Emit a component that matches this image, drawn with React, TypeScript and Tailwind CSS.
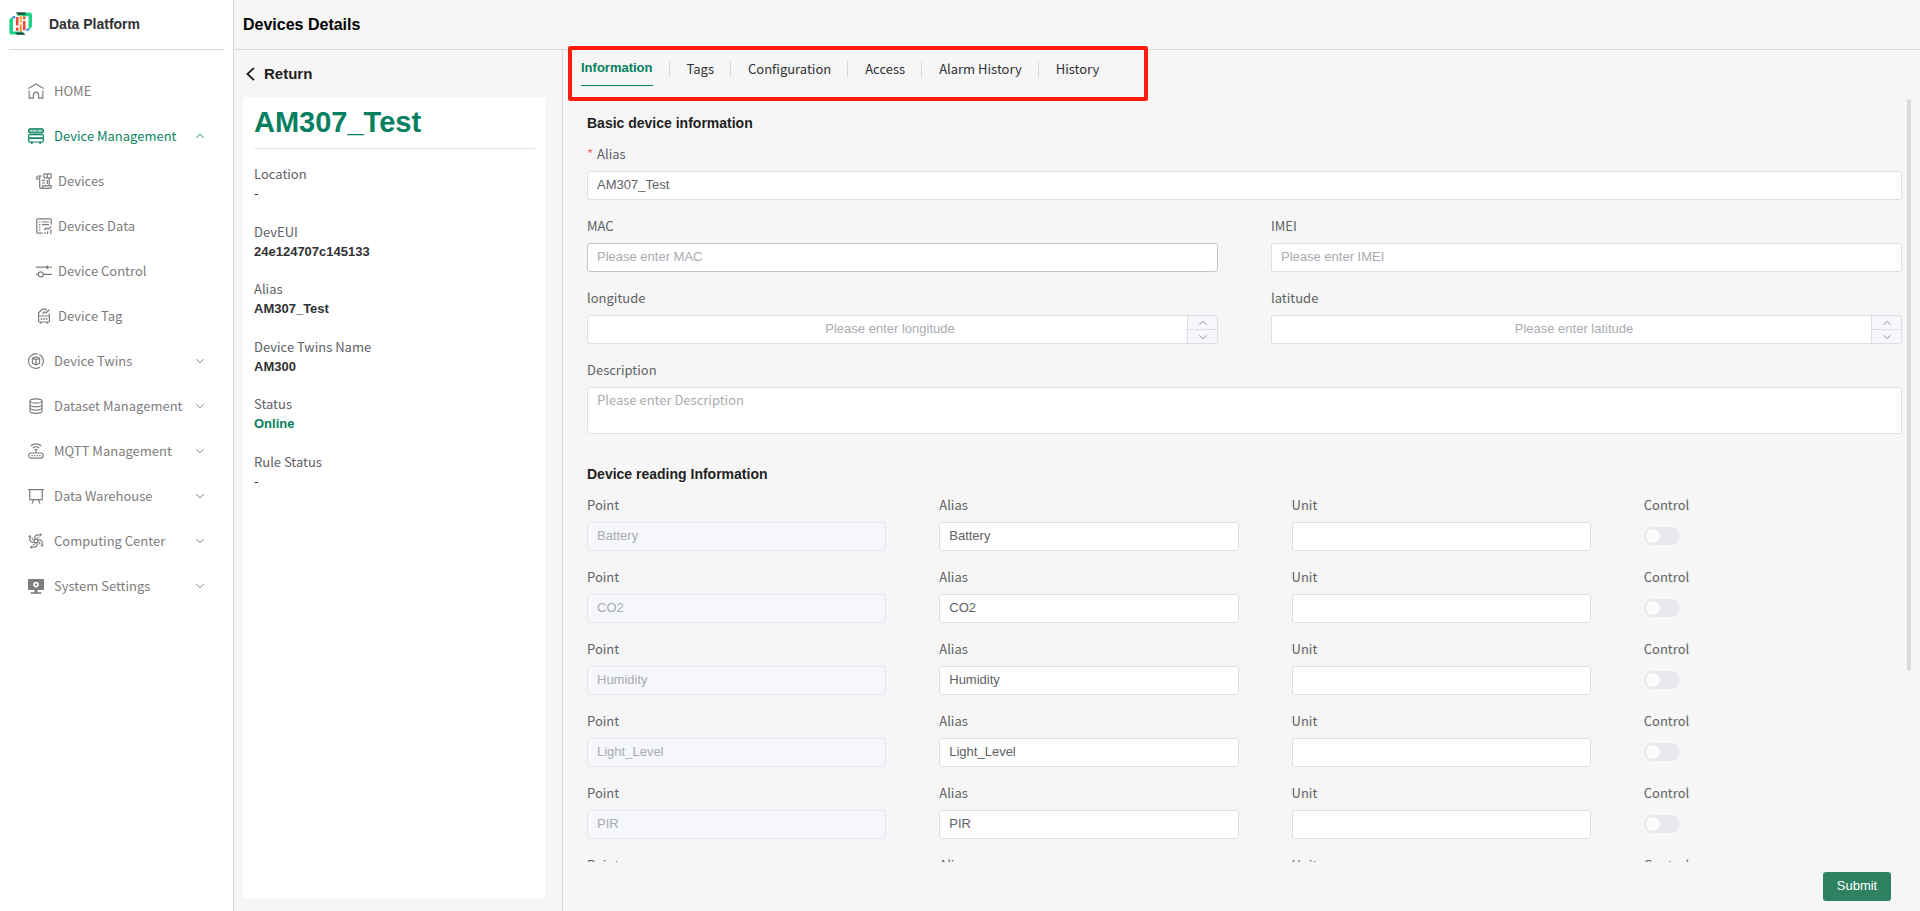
import React, { useId, useState } from "react";

const MENU_FONT = "font-['Noto_Sans_CJK_SC',sans-serif]";

type IconProps = { className?: string };

// 16x16 line icons used in the side menu
function Icon({ children, className = "" }: { children: React.ReactNode; className?: string }) {
  return (
    <svg className={`h-4 w-4 shrink-0 ${className}`} viewBox="0 0 16 16" fill="none" stroke="currentColor" strokeWidth="1.2" aria-hidden="true">
      {children}
    </svg>
  );
}

const HomeIcon = (p: IconProps) => (
  <Icon {...p}>
    <path d="M.4 5.4 8 1l7.6 4.4" />
    <path d="M1.2 7.6v7.6h4.2v-3.4a2.6 2.6 0 0 1 5.2 0v3.4h4.2V7.6" />
  </Icon>
);

const ServerIcon = (p: IconProps) => (
  <Icon {...p}>
    <rect x=".7" y=".8" width="14.6" height="4" rx="1.2" fill="currentColor" fillOpacity=".55" />
    <path d="M3 2.8h1.4M6 2.8h1.4M11 2.8h2" stroke="#fff" strokeWidth="1" />
    <rect x=".7" y="6.6" width="14.6" height="3.6" rx="1" />
    <rect x=".7" y="10.2" width="14.6" height="3.8" rx="1" />
    <path d="M3.8 14v1.8M12.2 14v1.8" strokeWidth="2" />
  </Icon>
);

const DevicesIcon = (p: IconProps) => (
  <Icon {...p}>
    <path d="M6 3H2.2a1.5 1.5 0 0 0-1.5 1.5V6h3M3.7 3.4V14c0 .8.5 1.4 1.4 1.4h8.8c.8 0 1.4-.6 1.4-1.4v-1.2H6.6V14c0 .8-.6 1.4-1.4 1.4" />
    <rect x="8" y=".8" width="7.2" height="4" rx=".6" />
    <path d="M11.4 1v3.6M13.2 4.8v8M11.4 7v4M6 7.4h3M6 10h3" />
  </Icon>
);

const DevicesDataIcon = (p: IconProps) => (
  <Icon {...p}>
    <path d="M6.6 15.2H1.8a1 1 0 0 1-1-1V1.8a1 1 0 0 1 1-1h12.4a1 1 0 0 1 1 1v5" />
    <path d="M3 4h1.4M6 4h7M3 6.6h1.4M6 6.6h7M3 9.2h1.4M3 11.8h1.4" />
    <path d="m8 12 2.4-2.2 1.8 1.4 3-2.8M9 14v2M11.6 13.4V16M14.8 11.6V16" />
  </Icon>
);

const DeviceControlIcon = (p: IconProps) => (
  <Icon {...p}>
    <path d="M0 4.2h9M13.6 4.2H16M0 11.4h2.4M7.2 11.4H16" strokeWidth="1.3" />
    <circle cx="11.2" cy="4.2" r="1.7" fill="currentColor" stroke="none" />
    <circle cx="4.8" cy="11.4" r="2.5" />
  </Icon>
);

const DeviceTagIcon = (p: IconProps) => (
  <Icon {...p}>
    <path d="M2.6 8V4.8L6.4 1.2h3.2l1.6 1M13.4 5.6V8" />
    <path d="m6.4 5.8 2.2-2L10 5l3.4-3.2" />
    <rect x="2.6" y="8" width="10.8" height="6" rx=".8" />
    <path d="M4.6 11h1.8M7.2 11h1.6M9.6 11h1.8M4.6 14v1.8M11.4 14v1.8" strokeWidth="1.6" />
  </Icon>
);

const TwinsIcon = (p: IconProps) => (
  <Icon {...p}>
    <path d="M9.8 1A7.3 7.3 0 1 0 12 14.1M13.4 13A7.3 7.3 0 0 0 11.2 1.5" />
    <path d="M4.4 5.2 8 4l3.6 1.2v5.2L8 11.8l-3.6-1.4zM4.4 5.4 8 6.6l3.6-1.2M8 6.6v5.2" />
  </Icon>
);

const DatasetIcon = (p: IconProps) => (
  <Icon {...p}>
    <ellipse cx="8" cy="3" rx="6" ry="2.2" />
    <path d="M2 3v10c0 1.3 2.7 2.3 6 2.3s6-1 6-2.3V3M2 6.4c0 1.3 2.7 2.2 6 2.2s6-.9 6-2.2M2 9.8C2 11.1 4.7 12 8 12s6-.9 6-2.2" />
  </Icon>
);

const MqttIcon = (p: IconProps) => (
  <Icon {...p}>
    <path d="M2.8 2.8C5.8.2 10.2.2 13.2 2.8M4.8 5c1.9-1.6 4.5-1.6 6.4 0M6.6 7c.9-.7 1.9-.7 2.8 0M8 7.4v2.4" />
    <rect x=".8" y="10" width="14.4" height="5.2" rx="2.6" />
    <path d="M3.4 12.6h9.2" strokeDasharray="1.4 1.2" strokeWidth="1.4" />
  </Icon>
);

const WarehouseIcon = (p: IconProps) => (
  <Icon {...p}>
    <path d="M0 1.6h16M1.8 1.6v10h12.4v-10M5.8 11.8 4 15.4M10.2 11.8l1.8 3.6" />
  </Icon>
);

const ComputingIcon = (p: IconProps) => (
  <Icon {...p}>
    <circle cx="8" cy="8" r="2" strokeWidth="1.4" />
    {[0, 90, 180, 270].map((angle) => (
      <g key={angle} transform={`rotate(${angle} 8 8)`}>
        <path d="M6.6 5.4C6.6 3 8.2 1.8 10 1.8h2.4" />
        <path d="M9.4 5.2c.4-.8 1-1.2 2-1.2" />
        <path d="M12 .2 14.2 1.8 12 3.4z" fill="currentColor" stroke="none" />
      </g>
    ))}
  </Icon>
);

const SettingsIcon = (p: IconProps) => (
  <Icon {...p}>
    <rect x="0" y="1" width="16" height="11" rx="1" fill="currentColor" stroke="none" />
    <circle cx="8" cy="6.6" r="2" stroke="#fff" strokeWidth="1.6" />
    <path d="M2.8 15h10.4" strokeWidth="1.6" />
    <path d="M8 12v3" strokeWidth="3" />
  </Icon>
);

function Logo() {
  return (
    <svg className="h-6 w-6 shrink-0" viewBox="0 0 24 24" aria-hidden="true">
      <path d="M7 .4h13.5A2.5 2.5 0 0 1 23 3v11.4L19.5 19V4.2H9.6z" fill="#1fd38a" />
      <path d="M7 .4h9.5v2.4H8.7z" fill="#1b4d3c" />
      <path d="M.4 7.2 4 4.6v15h9l2.6 3H3A2.6 2.6 0 0 1 .4 20z" fill="#1fd38a" />
      <path d="M6.5 20.4h8l1.8 2.3H7.8z" fill="#1b4d3c" />
      <circle cx="5" cy="5.2" r="1.3" fill="#3a86f0" />
      <circle cx="18.4" cy="17.8" r="1.3" fill="#3a86f0" />
      <path d="M8.2 5v8.6M15.2 9v9" stroke="#ea4b3c" strokeWidth="2.6" />
      <path d="M8.2 15.4v3.4M15.2 4.4v2.8" stroke="#ea4b3c" strokeWidth="2.6" />
      <path d="M11.7 3.4v7.2" stroke="#f5b335" strokeWidth="2" />
      <path d="M11.7 12.4v7.4" stroke="#f08a3a" strokeWidth="2" />
    </svg>
  );
}

function Chevron({ up = false, className = "" }: { up?: boolean; className?: string }) {
  return (
    <svg className={className} viewBox="0 0 8 8" fill="none" stroke="currentColor" aria-hidden="true">
      <path d={up ? "M.4 5.8 4 2.2l3.6 3.6" : "M.4 2.2 4 5.8l3.6-3.6"} />
    </svg>
  );
}

const menu = [
  { label: "HOME", icon: HomeIcon },
  {
    label: "Device Management",
    icon: ServerIcon,
    open: true,
    children: [
      { label: "Devices", icon: DevicesIcon },
      { label: "Devices Data", icon: DevicesDataIcon },
      { label: "Device Control", icon: DeviceControlIcon },
      { label: "Device Tag", icon: DeviceTagIcon },
    ],
  },
  { label: "Device Twins", icon: TwinsIcon, expandable: true },
  { label: "Dataset Management", icon: DatasetIcon, expandable: true },
  { label: "MQTT Management", icon: MqttIcon, expandable: true },
  { label: "Data Warehouse", icon: WarehouseIcon, expandable: true },
  { label: "Computing Center", icon: ComputingIcon, expandable: true },
  { label: "System Settings", icon: SettingsIcon, expandable: true },
];

const summary = [
  { label: "Location", value: "-" },
  { label: "DevEUI", value: "24e124707c145133" },
  { label: "Alias", value: "AM307_Test" },
  { label: "Device Twins Name", value: "AM300" },
  { label: "Status", value: "Online" },
  { label: "Rule Status", value: "-" },
];

const tabs = ["Information", "Tags", "Configuration", "Access", "Alarm History", "History"];

const readings = ["Battery", "CO2", "Humidity", "Light_Level", "PIR", "Pressure", "Temperature"];

function Sidebar() {
  return (
    <aside className="flex w-[234px] shrink-0 flex-col border-r border-[#d9d9d9] bg-white">
      <div className="mx-[9px] flex h-[50px] items-center gap-4 border-b border-[#d9d9d9] pb-px">
        <Logo />
        <span className="text-sm font-bold text-[#303133]">Data Platform</span>
      </div>
      <nav className={`pt-[18px] text-[13px] text-[#7d7d7d] ${MENU_FONT}`}>
        {menu.map(({ label, icon: ItemIcon, open, expandable, children }) => (
          <div key={label}>
            <a href="#" className={`flex h-[45px] items-center gap-[10px] pr-[29px] pl-7 ${open ? "text-[#0a8463]" : ""}`}>
              <ItemIcon />
              <span className="flex-1 whitespace-nowrap">{label}</span>
              {(open || expandable) && <Chevron up={open} className="h-2 w-2 shrink-0" />}
            </a>
            {children?.map(({ label: childLabel, icon: ChildIcon }) => (
              <a key={childLabel} href="#" className="flex h-[45px] items-center gap-[6px] pl-9">
                <ChildIcon />
                {childLabel}
              </a>
            ))}
          </div>
        ))}
      </nav>
    </aside>
  );
}

function DeviceSummary() {
  return (
    <section className="flex w-[329px] shrink-0 flex-col border-r border-[#d9d9d9] pr-[17px] pb-[13px] pl-[9px]">
      <button type="button" className="flex h-[47px] items-center gap-[9px] pt-px pl-[3px] text-[15px] font-bold text-[#1f1f1f]">
        <svg className="h-[14px] w-[9px]" viewBox="0 0 9 14" fill="none" stroke="currentColor" strokeWidth="1.8" aria-hidden="true">
          <path d="M8 .8 1.4 7 8 13.2" />
        </svg>
        Return
      </button>
      <div className="flex-1 rounded-[3px] bg-white pr-[10px] pl-[11px]">
        <h1 className="h-[52px] border-b border-[#e4e4e4] text-[29px] leading-[50px] font-bold text-[#048060]">AM307_Test</h1>
        <dl className="mt-[15px] grid h-[345px] grid-rows-6">
          {summary.map(({ label, value }) => (
            <div key={label}>
              <dt className={`text-[13px] leading-5 text-[#606266] ${MENU_FONT}`}>{label}</dt>
              <dd className={`text-[13px] leading-5 ${value === "-" ? "" : "font-bold"} ${value === "Online" ? "text-[#048060]" : "text-[#303133]"}`}>
                {value}
              </dd>
            </div>
          ))}
        </dl>
      </div>
    </section>
  );
}

function Label({ htmlFor, required, children }: { htmlFor: string; required?: boolean; children: React.ReactNode }) {
  return (
    <label htmlFor={htmlFor} className={`mb-2 block text-[13px] leading-[18px] text-[#606266] ${MENU_FONT}`}>
      {required && <span className="mr-1 text-[#f56c6c]">*</span>}
      {children}
    </label>
  );
}

interface TextFieldProps {
  label: string;
  value?: string;
  placeholder?: string;
  required?: boolean;
  disabled?: boolean;
  active?: boolean;
}

function TextField({ label, value = "", placeholder, required, disabled, active }: TextFieldProps) {
  const id = useId();
  const [text, setText] = useState(value);
  return (
    <div className="mb-[17px]">
      <Label htmlFor={id} required={required}>{label}</Label>
      <input
        id={id}
        type="text"
        value={text}
        placeholder={placeholder}
        disabled={disabled}
        onChange={(e) => setText(e.target.value)}
        className={`block h-[29px] w-full rounded-[3px] border bg-white px-[9px] pb-[2px] text-[13px] text-[#606266] placeholder:text-[#a8abb2] disabled:border-[#e4e7ed] disabled:bg-[#f5f7fa] disabled:text-[#a8abb2] ${active ? "border-[#c0c4cc]" : "border-[#dcdfe6]"}`}
      />
    </div>
  );
}

function NumberField({ label, placeholder }: { label: string; placeholder: string }) {
  const id = useId();
  const [value, setValue] = useState("");
  const step = (by: number) => setValue(String(Number(value || 0) + by));
  return (
    <div className="mb-[17px]">
      <Label htmlFor={id}>{label}</Label>
      <div className="flex h-[29px] overflow-hidden rounded-[3px] border border-[#dcdfe6] bg-white">
        <input
          id={id}
          type="text"
          inputMode="decimal"
          value={value}
          placeholder={placeholder}
          onChange={(e) => setValue(e.target.value)}
          className="min-w-0 flex-1 pr-1 pb-[2px] pl-[9px] text-center text-[13px] text-[#606266] placeholder:text-[#a8abb2]"
        />
        <div className="flex w-[30px] flex-col border-l border-[#dcdfe6] bg-[#f5f7fa] text-[#909399]">
          <button type="button" aria-label={`Increase ${label}`} onClick={() => step(1)} className="flex flex-1 items-center justify-center border-b border-[#dcdfe6]">
            <Chevron up className="h-2 w-2" />
          </button>
          <button type="button" aria-label={`Decrease ${label}`} onClick={() => step(-1)} className="flex flex-1 items-center justify-center">
            <Chevron className="h-2 w-2" />
          </button>
        </div>
      </div>
    </div>
  );
}

function ReadingRow({ name }: { name: string }) {
  const switchId = useId();
  return (
    <div className="grid grid-cols-[299fr_299fr_299fr_258fr] gap-x-[53px]">
      <TextField label="Point" value={name} disabled />
      <TextField label="Alias" value={name} />
      <TextField label="Unit" />
      <div>
        <Label htmlFor={switchId}>Control</Label>
        <div className="flex h-7 items-center">
          <input
            id={switchId}
            type="checkbox"
            role="switch"
            disabled
            className="flex h-[18px] w-9 appearance-none items-center rounded-full bg-[#e6e8ec] px-[2px] before:h-[14px] before:w-[14px] before:rounded-full before:bg-[#fbfbfb]"
          />
        </div>
      </div>
    </div>
  );
}

function Tabs() {
  const [active, setActive] = useState("Information");
  return (
    <nav className="relative flex h-[49px] shrink-0 items-start pl-[18px]">
      {tabs.map((tab, i) => (
        <React.Fragment key={tab}>
          {i > 0 && <span className="mt-[11px] mr-[17px] ml-4 h-4 w-px bg-[#d9d9d9]" />}
          <button
            type="button"
            onClick={() => setActive(tab)}
            className={
              tab === active
                ? "h-9 border-b border-[#048060] text-[13px] leading-[35px] font-bold text-[#048060]"
                : `h-9 text-[13px] leading-[38px] text-[#303133] ${MENU_FONT}`
            }
          >
            {tab}
          </button>
        </React.Fragment>
      ))}
      {/* highlight frame around the tab bar */}
      <div className="pointer-events-none absolute -top-1 left-[5px] h-[55px] w-[580px] rounded-[2px] border-4 border-[#ff1d10]" />
    </nav>
  );
}

function DeviceForm() {
  const descId = useId();
  return (
    <form className="flex min-h-0 flex-1 flex-col" onSubmit={(e) => e.preventDefault()}>
      <div className="relative min-h-0 flex-1">
        <div className="h-full overflow-hidden pt-[14px] pr-[18px] pl-6">
          <h2 className="mb-3 text-sm leading-5 font-bold text-[#1f1f1f]">Basic device information</h2>
          <TextField label="Alias" value="AM307_Test" required />
          <div className="grid grid-cols-2 gap-x-[53px]">
            <TextField label="MAC" placeholder="Please enter MAC" active />
            <TextField label="IMEI" placeholder="Please enter IMEI" />
            <NumberField label="longitude" placeholder="Please enter longitude" />
            <NumberField label="latitude" placeholder="Please enter latitude" />
          </div>
          <Label htmlFor={descId}>Description</Label>
          <textarea
            id={descId}
            placeholder="Please enter Description"
            className={`block h-[47px] w-full resize-none rounded-[3px] border border-[#dcdfe6] bg-white px-[9px] py-[2px] text-[13px] leading-5 text-[#606266] placeholder:text-[#a8abb2] ${MENU_FONT}`}
          />
          <h2 className="mt-[30px] mb-3 text-sm leading-5 font-bold text-[#1f1f1f]">Device reading Information</h2>
          {readings.map((name) => (
            <ReadingRow key={name} name={name} />
          ))}
        </div>
        <div className="absolute top-0 right-[9px] h-3/4 w-1 rounded-full bg-[#d9dadb]" />
      </div>
      <div className="flex h-[49px] shrink-0 items-center justify-end pr-[29px]">
        <button type="submit" className="h-[29px] w-[68px] rounded-[3px] bg-[#2e8262] pb-[2px] text-[13px] text-white">
          Submit
        </button>
      </div>
    </form>
  );
}

export default function App() {
  return (
    <div className="flex h-screen overflow-hidden bg-[#f6f6f6] font-['Liberation_Sans',Arial,sans-serif]">
      <Sidebar />
      <main className="flex min-w-0 flex-1 flex-col">
        <header className="flex h-[50px] shrink-0 items-center border-b border-[#d9d9d9] pl-[9px] text-base font-bold text-black">
          Devices Details
        </header>
        <div className="flex min-h-0 flex-1">
          <DeviceSummary />
          <section className="flex min-w-0 flex-1 flex-col">
            <Tabs />
            <DeviceForm />
          </section>
        </div>
      </main>
    </div>
  );
}
